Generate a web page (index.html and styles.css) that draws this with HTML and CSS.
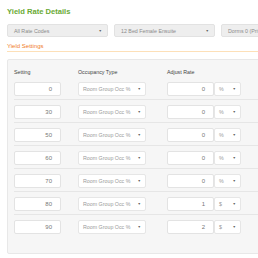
FILE: index.html
```html
<!DOCTYPE html>
<html>
<head>
<meta charset="utf-8">
<link rel="stylesheet" href="styles.css">
</head>
<body>
<div class="page">
  <h1 class="title">Yield Rate Details</h1>
  <div class="filters">
    <div class="filter"><span>All Rate Codes</span><i class="caret">▼</i></div>
    <div class="filter"><span>12 Bed Female Ensuite</span><i class="caret">▼</i></div>
    <div class="filter"><span>Dorms 0 (Private)</span><i class="caret">▼</i></div>
  </div>
  <div class="section-title">Yield Settings</div>
  <div class="panel">
    <div class="grid head">
      <div class="lbl">Setting</div>
      <div class="lbl">Occupancy Type</div>
      <div class="lbl">Adjust Rate</div>
    </div>
    <div class="grid row">
      <div class="inp">0</div>
      <div class="sel occ"><span>Room Group Occ %</span><i class="caret">▼</i></div>
      <div class="adj"><div class="inp">0</div><div class="sel unit"><span>%</span><i class="caret">▼</i></div></div>
    </div>
    <div class="grid row">
      <div class="inp">30</div>
      <div class="sel occ"><span>Room Group Occ %</span><i class="caret">▼</i></div>
      <div class="adj"><div class="inp">0</div><div class="sel unit"><span>%</span><i class="caret">▼</i></div></div>
    </div>
    <div class="grid row">
      <div class="inp">50</div>
      <div class="sel occ"><span>Room Group Occ %</span><i class="caret">▼</i></div>
      <div class="adj"><div class="inp">0</div><div class="sel unit"><span>%</span><i class="caret">▼</i></div></div>
    </div>
    <div class="grid row">
      <div class="inp">60</div>
      <div class="sel occ"><span>Room Group Occ %</span><i class="caret">▼</i></div>
      <div class="adj"><div class="inp">0</div><div class="sel unit"><span>%</span><i class="caret">▼</i></div></div>
    </div>
    <div class="grid row">
      <div class="inp">70</div>
      <div class="sel occ"><span>Room Group Occ %</span><i class="caret">▼</i></div>
      <div class="adj"><div class="inp">0</div><div class="sel unit"><span>%</span><i class="caret">▼</i></div></div>
    </div>
    <div class="grid row">
      <div class="inp">80</div>
      <div class="sel occ"><span>Room Group Occ %</span><i class="caret">▼</i></div>
      <div class="adj"><div class="inp">1</div><div class="sel unit"><span>$</span><i class="caret">▼</i></div></div>
    </div>
    <div class="grid row last">
      <div class="inp">90</div>
      <div class="sel occ"><span>Room Group Occ %</span><i class="caret">▼</i></div>
      <div class="adj"><div class="inp">2</div><div class="sel unit"><span>$</span><i class="caret">▼</i></div></div>
    </div>
  </div>
</div>
</body>
</html>
```
FILE: styles.css
```css
html, body {
  margin: 0;
  padding: 0;
  background: #ffffff;
  overflow: hidden;
}
body {
  font-family: "Liberation Sans", Arial, sans-serif;
  width: 258px;
  height: 258px;
}
.page {
  padding: 7px 0 0 7px;
  width: 330px;
}
.title {
  margin: 0;
  font-size: 7.6px;
  line-height: 10px;
  font-weight: bold;
  color: #6aaa35;
}
.filters {
  display: flex;
  gap: 6px;
  margin-top: 7px;
}
.filter {
  width: 88px;
  height: 11px;
  border: 1px solid #e2e2e2;
  border-radius: 2px;
  background: #eeeeee;
  display: flex;
  align-items: center;
  justify-content: space-between;
  padding: 0 5px 0 6px;
  box-sizing: content-box;
  font-size: 5.3px;
  color: #8a8a8a;
  white-space: nowrap;
}
.caret {
  font-style: normal;
  font-size: 3.5px;
  color: #666;
}
.section-title {
  margin-top: 4px;
  font-size: 6px;
  line-height: 10px;
  color: #f07d28;
  border-bottom: 1.5px solid #fde0b8;
}
.panel {
  margin-top: 7px;
  background: #f6f6f6;
  border: 1px solid #e8e8e8;
  border-radius: 2px;
  padding: 0 0 15px 6px;
}
.grid {
  display: grid;
  grid-template-columns: 64px 89px 80px;
}
.head {
  height: 17px;
  align-items: end;
  padding-bottom: 2px;
  box-sizing: border-box;
}
.lbl {
  font-size: 5.3px;
  color: #444;
}
.row {
  height: 23px;
  border-bottom: 1px solid #e6e6e6;
  align-items: start;
  padding-top: 5px;
  box-sizing: border-box;
}
.row.last { border-bottom: none; }
.inp {
  width: 47px;
  height: 14px;
  box-sizing: border-box;
  background: #fff;
  border: 1px solid #e3e3e3;
  border-radius: 2px;
  text-align: right;
  padding-right: 8px;
  font-size: 6px;
  line-height: 12px;
  color: #777;
}
.sel {
  height: 14px;
  box-sizing: border-box;
  background: #fff;
  border: 1px solid #e6e6e6;
  border-radius: 2px;
  display: flex;
  align-items: center;
  justify-content: space-between;
  padding: 0 4px 0 4px;
  font-size: 5.3px;
  color: #9a9a9a;
  white-space: nowrap;
}
.occ { width: 68px; }
.adj {
  display: flex;
}
.unit { width: 27px; }
```
